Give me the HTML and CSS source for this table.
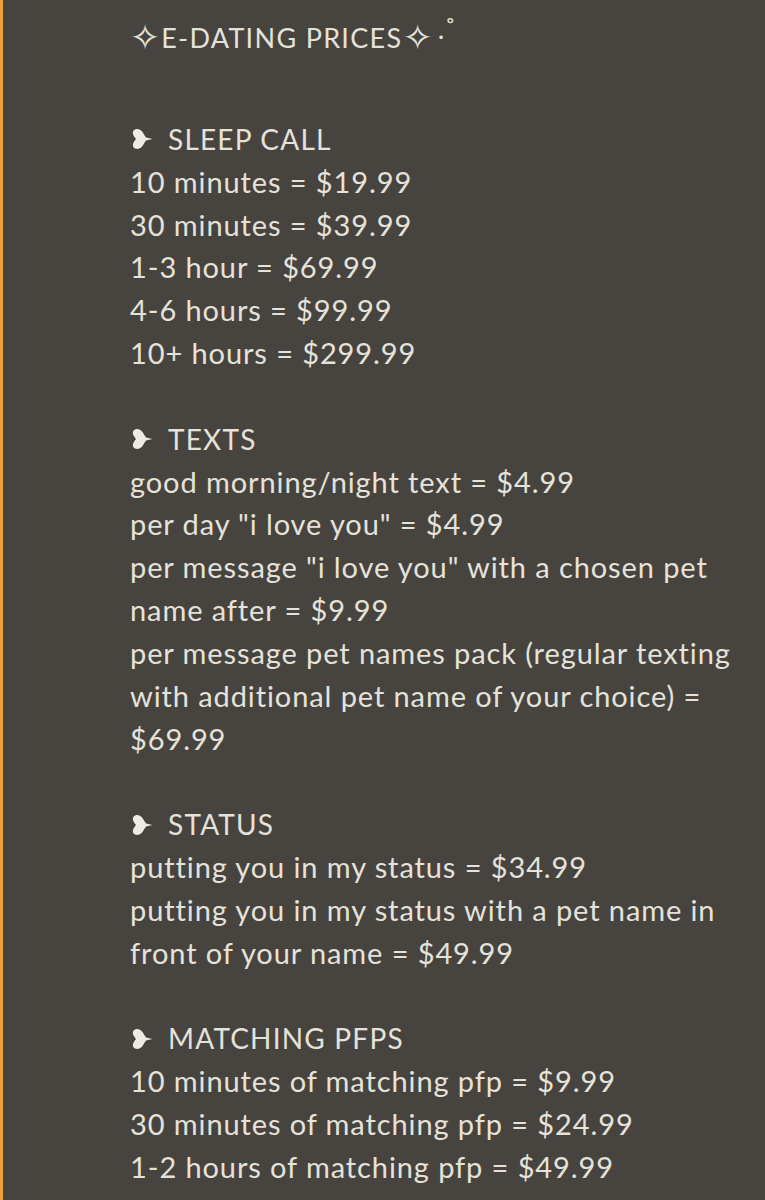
FILE: index.html
```html
<!DOCTYPE html>
<html>
<head>
<meta charset="utf-8">
<link rel="stylesheet" href="styles.css">
</head>
<body>
<div class="page">
  <div class="bar"></div>
  <main class="content">
    <h1 class="title"><span class="star">✧</span>E-DATING PRICES<span class="star">✧</span><span class="dot">•</span><span class="ring">˚</span></h1>

    <section class="section">
      <h2 class="head"><svg class="heart" viewBox="0 0 22 22"><path d="M4 1.5 C8 0 11 2.5 13 6.5 L15 9.6 L21.5 11 L15 12.4 L13 15.5 C11 19.5 8 22 4 20.5 C1 19 1 15.5 5 11 C1 6.5 1 3 4 1.5 Z"/></svg>SLEEP CALL</h2>
      <p class="line">10 minutes = $19.99</p>
      <p class="line">30 minutes = $39.99</p>
      <p class="line">1-3 hour = $69.99</p>
      <p class="line">4-6 hours = $99.99</p>
      <p class="line">10+ hours = $299.99</p>
    </section>

    <section class="section">
      <h2 class="head"><svg class="heart" viewBox="0 0 22 22"><path d="M4 1.5 C8 0 11 2.5 13 6.5 L15 9.6 L21.5 11 L15 12.4 L13 15.5 C11 19.5 8 22 4 20.5 C1 19 1 15.5 5 11 C1 6.5 1 3 4 1.5 Z"/></svg>TEXTS</h2>
      <p class="line">good morning/night text = $4.99</p>
      <p class="line">per day "i love you" = $4.99</p>
      <p class="line">per message "i love you" with a chosen pet name after = $9.99</p>
      <p class="line">per message pet names pack (regular texting with additional pet name of your choice) = $69.99</p>
    </section>

    <section class="section">
      <h2 class="head"><svg class="heart" viewBox="0 0 22 22"><path d="M4 1.5 C8 0 11 2.5 13 6.5 L15 9.6 L21.5 11 L15 12.4 L13 15.5 C11 19.5 8 22 4 20.5 C1 19 1 15.5 5 11 C1 6.5 1 3 4 1.5 Z"/></svg>STATUS</h2>
      <p class="line">putting you in my status = $34.99</p>
      <p class="line">putting you in my status with a pet name in front of your name = $49.99</p>
    </section>

    <section class="section">
      <h2 class="head"><svg class="heart" viewBox="0 0 22 22"><path d="M4 1.5 C8 0 11 2.5 13 6.5 L15 9.6 L21.5 11 L15 12.4 L13 15.5 C11 19.5 8 22 4 20.5 C1 19 1 15.5 5 11 C1 6.5 1 3 4 1.5 Z"/></svg>MATCHING PFPS</h2>
      <p class="line">10 minutes of matching pfp = $9.99</p>
      <p class="line">30 minutes of matching pfp = $24.99</p>
      <p class="line">1-2 hours of matching pfp = $49.99</p>
    </section>
  </main>
</div>
</body>
</html>
```

FILE: styles.css
```css
html, body {
  margin: 0;
  padding: 0;
  background: #47443f;
}
.page {
  display: flex;
  width: 765px;
  height: 1200px;
  overflow: hidden;
  background: #47443f;
}
.bar {
  width: 3px;
  flex: none;
  background: #e7a338;
}
.content {
  padding: 17px 10px 0 127px;
  font-family: "Lato", "DejaVu Sans", sans-serif;
  font-weight: 400;
  font-size: 29px;
  line-height: 42.83px;
  color: #e5e2da;
}
.title {
  margin: 0 0 59px 0;
  display: flex;
  align-items: center;
  font-size: 27px;
  font-weight: 400;
  letter-spacing: 1.3px;
  line-height: 42px;
}
.star {
  font-family: "DejaVu Sans", sans-serif;
  font-size: 36px;
  font-weight: 400;
  margin: 0 1px 0 0;
  letter-spacing: 0;
}
.dot {
  font-family: "DejaVu Sans", sans-serif;
  font-size: 12px;
  margin-left: 4px;
  letter-spacing: 0;
}
.ring {
  font-family: "DejaVu Sans", sans-serif;
  font-size: 22px;
  margin-left: 0;
  align-self: flex-start;
  line-height: 24px;
}
.section {
  margin-bottom: 42.83px;
}
.head {
  margin: 0;
  display: flex;
  align-items: center;
  font-size: 28px;
  font-weight: 400;
  letter-spacing: 1.2px;
}
.heart {
  width: 22px;
  height: 22px;
  fill: #ecebe6;
  margin: 0 15px 0 1px;
}
.line {
  margin: 0;
  letter-spacing: 0.9px;
}
```
